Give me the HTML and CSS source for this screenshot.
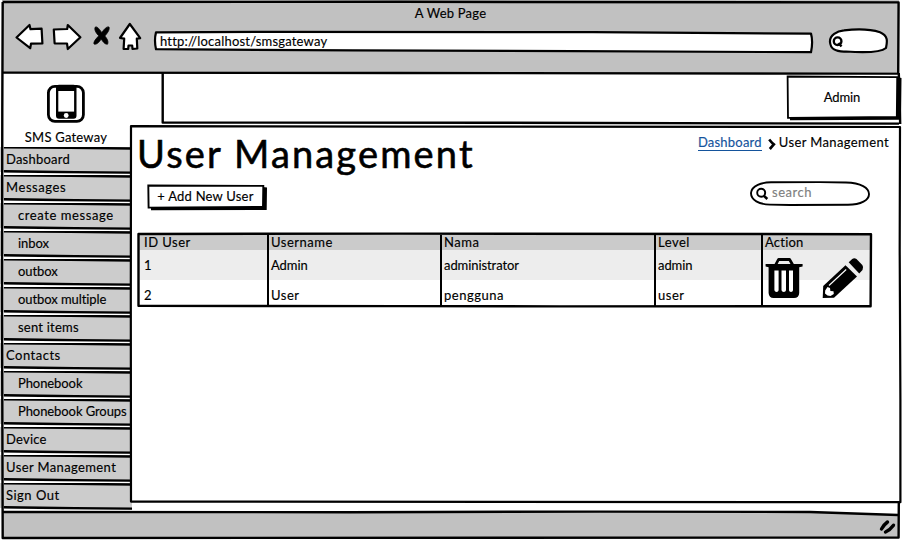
FILE: index.html
```html
<!DOCTYPE html>
<html lang="en">
<head>
<meta charset="utf-8">
<title>SMS Gateway - User Management</title>
<link rel="stylesheet" href="styles.css">
</head>
<body>
<svg class="defs" width="0" height="0">
  <symbol id="item-frame" viewBox="0 0 132 28">
    <path d="M0 24.9L8 25.6L60 26.5L132 26.9V28H0Z" fill="#fff"/>
    <path d="M4 0.4L70 0.8L132 1.5" class="ink"/>
    <path d="M4 24.3L40 24.7L75 25.1L132 25.6" class="ink"/>
  </symbol>
</svg>
<div class="window">
  <header class="chrome">
    <div class="chrome-title snug">A Web Page</div>
    <div class="chrome-tools">
      <svg class="nav-icons" width="130" height="32" viewBox="14 21 130 32">
        <g class="ink-fill">
          <path d="M16.5 37.5L29.5 25L30.5 29.2L41.6 28.7L42.4 43.5L31 43.7L30.2 48.2Z"/>
          <path d="M53.8 29.5L67.2 29L67.8 25L80.4 37.2L67.8 49L67 43.5L54.6 43.3Z"/>
          <path d="M129.8 24L140.2 38.2L136.8 38.6L137.3 48.5L132.5 49L132.2 45.5L128.5 45.5L128.2 48.8L123.6 49L124.2 38.6L120 38Z"/>
        </g>
        <path d="M95.2 27.2C97 25.7 100 30 101.8 32.5C104 29.5 106.5 26.2 109 27C110 30 107 33.5 104.8 36C107 38.5 108.8 41.5 107.5 44.2C104.5 44.5 102.5 41 101.2 39C99.5 41.5 97 45 94 44C93.3 41.5 96.5 38.3 98.8 35.8C96.5 33.5 93.9 30 95.2 27.2Z" stroke="#000" stroke-width="0.8"/>
      </svg>
      <div class="address">
        <svg class="sketch" viewBox="0 0 662 23"><path class="ink-fill" d="M3 1.4L120 0.8L440 1.2L658 2.6Q660.2 10.4 658 21.2L420 20.2L200 19.4L3 18.2Q1 9 3 1.4Z"/></svg>
        <span class="url">http://localhost/smsgateway</span>
      </div>
      <svg class="mini-search" width="62" height="28" viewBox="827 27 62 28">
        <path class="ink-fill" d="M830 42C829.5 35 837 31 844 30.4C858 28.7 872 29.7 880 32.2C888 35.5 887.5 41 886 48C880 53 860 52.5 846 51.5C835 52 830.5 49 830 42Z"/>
        <circle cx="837.6" cy="41.2" r="3.8" class="ink"/>
        <path class="ink" d="M838.5 43L841.5 46.5"/>
      </svg>
    </div>
  </header>

  <div class="page">
    <aside class="sidebar">
      <div class="brand">
        <svg width="40" height="40" viewBox="46 84 40 40">
          <rect x="48.4" y="86.3" width="35" height="35" rx="6.5" fill="#fff" stroke="#000" stroke-width="2.8"/>
          <rect x="56" y="84.8" width="20.5" height="34" rx="3"/>
          <rect x="58.3" y="91" width="15.8" height="20.6" fill="#fff"/>
          <circle cx="66.2" cy="115.5" r="2.4" fill="#fff"/>
        </svg>
        <div class="brand-name snug">SMS Gateway</div>
      </div>
      <nav class="menu">
        <a class="item"><svg class="sketch"><use href="#item-frame"/></svg><span class="snug">Dashboard</span></a>
        <a class="item"><svg class="sketch"><use href="#item-frame"/></svg><span class="wide">Messages</span></a>
        <a class="item sub"><svg class="sketch"><use href="#item-frame"/></svg><span class="wide">create message</span></a>
        <a class="item sub"><svg class="sketch"><use href="#item-frame"/></svg><span class="tight">inbox</span></a>
        <a class="item sub"><svg class="sketch"><use href="#item-frame"/></svg><span class="tight">outbox</span></a>
        <a class="item sub"><svg class="sketch"><use href="#item-frame"/></svg><span class="tight">outbox multiple</span></a>
        <a class="item sub"><svg class="sketch"><use href="#item-frame"/></svg><span class="snug">sent items</span></a>
        <a class="item"><svg class="sketch"><use href="#item-frame"/></svg><span>Contacts</span></a>
        <a class="item sub"><svg class="sketch"><use href="#item-frame"/></svg><span class="tight">Phonebook</span></a>
        <a class="item sub"><svg class="sketch"><use href="#item-frame"/></svg><span class="tight">Phonebook Groups</span></a>
        <a class="item"><svg class="sketch"><use href="#item-frame"/></svg><span class="snug">Device</span></a>
        <a class="item"><svg class="sketch"><use href="#item-frame"/></svg><span class="normal">User Management</span></a>
        <a class="item"><svg class="sketch"><use href="#item-frame"/></svg><span>Sign Out</span></a>
      </nav>
    </aside>

    <div class="content">
      <div class="topbar">
        <svg class="sketch" viewBox="130 72 772 53"><path class="ink" d="M162.7 73V122.5L500 122.8L899 123.6"/></svg>
        <div class="account">
          <svg class="sketch" viewBox="786 75 116 47">
            <path d="M897 77L901.5 78L901 119.8L790 120.2V117L897 116.5Z"/>
            <path d="M787.6 76.5L897.2 77.2L896.8 117L788 117.8Z" fill="#fff" stroke="#000" stroke-width="1.8"/>
          </svg>
          <span class="tight">Admin</span>
        </div>
      </div>

      <main class="panel">
        <svg class="sketch" viewBox="130 125 772 379"><path class="ink panel-edge" d="M131 126.2L400 126.6L900 127L899.7 250L900.4 400V502.2L500 501.9L131 501.6L130.8 300Z"/></svg>
        <div class="panel-head">
          <h1>User Management</h1>
          <div class="crumbs">
            <a class="link snug">Dashboard</a>
            <svg width="9" height="13" viewBox="0 0 9 13"><path d="M1.2 1.5Q4 5 5.8 6.4Q4 8.5 1.8 11" fill="none" stroke="#000" stroke-width="2.7"/></svg>
            <span class="normal">User Management</span>
          </div>
        </div>
        <div class="actions">
          <button class="add">
            <svg class="sketch" viewBox="147 184 121 27">
              <path d="M263 187L267 187.4L266.7 210L151 210.3V207L263 206Z"/>
              <path d="M148.3 185.5L263.3 185.9L263 207L148.6 207.6Z" fill="#fff" stroke="#000" stroke-width="1.9"/>
            </svg>
            <span class="snug">+ Add New User</span>
          </button>
          <div class="search">
            <svg class="sketch" viewBox="749 180 122 27">
              <path d="M751 193C751.5 185.5 762 182.4 771 182.2L820 182.1L846 182.5C861 182.7 869 188 869 194C869.2 200 861 204.7 848 204.8L790 205L770 204.6C759 204.4 750.8 200 751 193Z" fill="#fff" stroke="#000" stroke-width="1.9"/>
              <circle cx="761.2" cy="192.7" r="4" fill="none" stroke="#000" stroke-width="1.9"/>
              <path d="M764 195.8L767.3 199" stroke="#000" stroke-width="2.5"/>
            </svg>
            <span>search</span>
          </div>
        </div>
        <div class="grid">
          <svg class="sketch" viewBox="137 232 736 76">
            <path class="ink" d="M138.5 234L400 233.6L871 234.2L870.6 306.2L560 306.4L400 306.1L138.5 305.8Z"/>
            <path class="ink thin" d="M268 235V306M441 235V306M655 235V306M762 235V306"/>
          </svg>
          <table>
            <tr><th>ID User</th><th>Username</th><th>Nama</th><th>Level</th><th class="snug">Action</th></tr>
            <tr class="shade"><td>1</td><td class="tight">Admin</td><td class="tight">administrator</td><td class="tight">admin</td><td></td></tr>
            <tr><td>2</td><td>User</td><td>pengguna</td><td>user</td><td></td></tr>
          </table>
          <div class="row-tools">
            <svg width="38" height="42" viewBox="765 257 38 42">
              <path d="M774 265L777.4 258.8Q777.8 258 778.6 258H789.6Q790.4 258 790.8 258.8L794.4 265L790.8 264.4L788.8 261.1H779.2L777.4 264.6Z"/>
              <path d="M765.6 264H802.6V266.6L799.2 267.3V293Q799 298 794 298H773.5Q769 298 768.6 293V267.3L765.6 266.6Z"/>
              <path fill="#fff" d="M774.4 270.5h4.2v19.7q-.2 1.7-2 1.7t-2.2-1.7ZM781.5 270.5h4.5v19.7q-.3 1.7-2.2 1.7t-2.3-1.7ZM789 270.5h4v19.7q-.2 1.7-2 1.7t-2-1.7Z"/>
            </svg>
            <svg width="42" height="42" viewBox="822 257 42 42">
              <path d="M822.7 298L823.2 286L845.5 265.3L857 276.5L834 297.8Z"/>
              <path d="M848.7 262.3L852.2 259Q854.3 257.4 856.5 259L862.3 265Q864 267.2 862.5 270L859.2 273.5Z"/>
              <path fill="#fff" d="M825.2 290.5L827.5 287L830 288L830.4 291L833.5 291.2L833.8 294L830.5 296L827.5 295.6L825 293.6Z"/>
              <path d="M829 285.5L846.2 269.5" fill="none" stroke="#fff" stroke-width="1.1"/>
            </svg>
          </div>
        </div>
      </main>
    </div>
  </div>

  <footer class="status">
    <svg class="sketch" viewBox="0 510 902 30">
      <path d="M2 512L600 511.6L810 512L898 515V538H2Z" fill="#c1c1c1"/>
      <path class="ink" d="M2 512L350 512.2L600 511.6L810 512L898 515"/>
      <path d="M881.5 529Q884 524.5 887.5 522M885.5 532Q890 530 893.5 525.2" fill="none" stroke="#000" stroke-width="3.4" stroke-linecap="round"/>
    </svg>
  </footer>
  <svg class="sketch frame" viewBox="0 0 902 540">
    <path class="ink" d="M2.7 2L400 1.8L898.6 2.4L898.2 73M2.7 2L2.3 110L2 300L2.7 538L500 537.8L898.6 537.6L898.8 503M898.8 73L900.2 124"/>
    <path class="ink" d="M3 72.6L400 73L899 73.6"/>
  </svg>
</div>
</body>
</html>
```

FILE: styles.css
```css
* { box-sizing: border-box; }

body {
  margin: 0;
  background: #fff;
  color: #000;
  font: 13px/16px Lato, "Open Sans", sans-serif;
  letter-spacing: 0.5px;
  -webkit-text-stroke: 0.15px currentColor;
}

.tight { letter-spacing: -0.08px; }
.snug { letter-spacing: 0.22px; }
.normal { letter-spacing: 0.38px; }
.wide { letter-spacing: 0.58px; }

.defs { position: absolute; }

.window {
  position: relative;
  display: flex;
  flex-direction: column;
  width: 902px;
  height: 540px;
  overflow: hidden;
}

.sketch {
  position: absolute;
  inset: 0;
  width: 100%;
  height: 100%;
  overflow: visible;
  pointer-events: none;
}

.sketch + span { position: relative; }

.ink { fill: none; stroke: #000; stroke-width: 2.4; stroke-linejoin: round; }
.thin { stroke-width: 2; }
.panel-edge { fill: #fff; stroke-width: 2.2; }
.ink-fill { fill: #fff; stroke: #000; stroke-width: 2.2; stroke-linejoin: round; }

/* Browser chrome */
.chrome {
  height: 72px;
  margin: 0 3px 0 2px;
  padding-top: 5px;
  background: #c1c1c1;
}
.chrome-title { text-align: center; }
.chrome-tools {
  display: flex;
  align-items: flex-start;
  padding-left: 12px;
}
.address {
  position: relative;
  width: 662px;
  height: 23px;
  margin: 10px 0 0 9px;
  padding: 2px 7px;
}
.url { letter-spacing: 0.2px; }
.mini-search { margin: 6px 0 0 12px; }

/* Page area */
.page {
  display: flex;
  height: 438px;
}
.sidebar { width: 130px; }
.brand {
  display: flex;
  flex-direction: column;
  align-items: center;
  height: 75px;
  padding: 12px 0 0 2px;
}
.brand-name { margin-top: 5px; white-space: nowrap; }

.menu { display: flex; flex-direction: column; width: 132px; }
.item {
  position: relative;
  height: 28px;
  padding: 4px 0 0 6px;
  background: #ccc;
  white-space: nowrap;
}
.sub { padding-left: 18px; }

.content {
  position: relative;
  display: flex;
  flex-direction: column;
  width: 772px;
}
.topbar {
  position: relative;
  display: flex;
  justify-content: flex-end;
  height: 53px;
  padding-top: 3px;
}
.account {
  position: relative;
  width: 116px;
  height: 47px;
  padding: 14px 4px 0 0;
  text-align: center;
}

.panel {
  position: relative;
  height: 379px;
  padding: 3px 13px 0 7px;
}
.panel-head {
  position: relative;
  display: flex;
  justify-content: space-between;
  height: 56px;
}
h1 {
  margin: 0;
  font-size: 38px;
  font-weight: 400;
  line-height: 50px;
  letter-spacing: 2.15px;
  white-space: nowrap;
  -webkit-text-stroke: 0.6px #000;
}
.crumbs {
  display: flex;
  align-items: flex-start;
  padding-top: 6px;
}
.crumbs svg { margin: 4px 2px 0 6px; }
.link { color: #14539c; border-bottom: 1px solid #14539c; }

.actions {
  display: flex;
  justify-content: space-between;
  height: 48px;
  padding: 0 18px 0 10px;
}
.add {
  position: relative;
  width: 121px;
  height: 27px;
  padding: 0 4px 4px 0;
  border: 0;
  background: none;
  color: inherit;
  font: inherit;
  letter-spacing: inherit;
  white-space: nowrap;
}
.search {
  position: relative;
  width: 122px;
  height: 27px;
  margin-top: -4px;
  padding: 4px 0 0 23px;
  color: #808080;
}

.grid {
  position: relative;
  width: 736px;
  height: 76px;
  padding: 2px;
}
table {
  width: 732px;
  border-collapse: collapse;
  table-layout: fixed;
}
th, td { padding: 0 0 0 3px; text-align: left; font-weight: 400; }
th:first-child, td:first-child { padding-left: 5px; }
th { height: 16px; background: #cbcbcb; }
td { height: 30px; vertical-align: middle; }
tr:last-child td { height: 26px; padding-top: 4px; }
.shade td { background: #ededed; }
th:nth-child(1) { width: 129px; }
th:nth-child(2) { width: 173px; }
th:nth-child(3) { width: 214px; }
th:nth-child(4) { width: 107px; }
.row-tools {
  position: absolute;
  left: 628px;
  top: 25px;
  display: flex;
  gap: 19px;
}

.status { position: relative; height: 30px; }
```
